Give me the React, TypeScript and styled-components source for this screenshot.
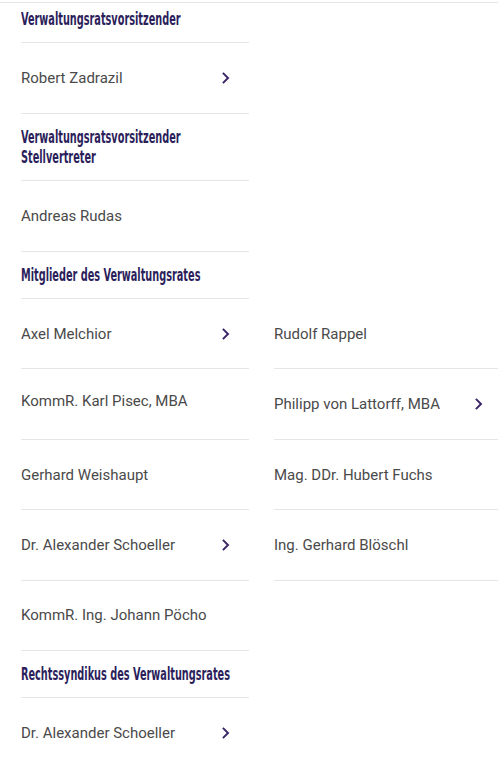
import React from "react";
import styled, { createGlobalStyle } from "styled-components";

const Global = createGlobalStyle`
  html, body { margin: 0; padding: 0; background: #fff; }
  body { overflow: hidden; }
`;

const Page = styled.div`
  width: 498px;
  overflow: hidden;
`;

const TopRule = styled.div`
  margin-top: 2px;
  height: 1px;
  background: #e6e6e6;
`;

const Content = styled.div`
  padding-left: 21px;
  width: 481px;
  overflow: hidden;
`;

const Column = styled.div`
  width: 228px;
`;

const Heading = styled.div<{ $first?: boolean }>`
  box-sizing: border-box;
  padding: ${(p) => (p.$first ? "6px" : "13.25px")} 0 13.25px;
  border-bottom: 1px solid #e6e6e6;
`;

const HeadingText = styled.h2`
  margin: 0;
  display: block;
  width: 390px;
  transform: scaleX(0.585);
  transform-origin: left center;
  font-family: "DejaVu Sans Condensed", "Liberation Sans", sans-serif;
  font-weight: 700;
  font-size: 18.5px;
  line-height: 20px;
  color: #2b1e5b;
`;

const Grid = styled.div`
  display: grid;
  grid-template-columns: 228px 228px;
  column-gap: 25px;
`;

const Row = styled.div<{ $raised?: boolean }>`
  box-sizing: border-box;
  height: 70.4px;
  display: flex;
  align-items: center;
  justify-content: space-between;
  padding: 0 19px ${(p) => (p.$raised ? "7px" : "0")} 0;
  border-bottom: 1px solid #e6e6e6;
`;

const Name = styled.span`
  font-family: Roboto, "Liberation Sans", sans-serif;
  font-size: 15px;
  color: #4a4a4a;
`;

const Chevron = () => (
  <svg width="8" height="12" viewBox="0 0 8 12" aria-hidden="true">
    <path d="M1.6 1.6 L6 6 L1.6 10.4" fill="none" stroke="#3b2766" strokeWidth="2" strokeLinecap="square" />
  </svg>
);

type Person = { name: string; link?: boolean; raised?: boolean };

const Person = ({ name, link, raised }: Person) => (
  <Row $raised={raised}>
    <Name>{name}</Name>
    {link && <Chevron />}
  </Row>
);

const members: Person[] = [
  { name: "Axel Melchior", link: true },
  { name: "Rudolf Rappel" },
  { name: "KommR. Karl Pisec, MBA", raised: true },
  { name: "Philipp von Lattorff, MBA", link: true },
  { name: "Gerhard Weishaupt" },
  { name: "Mag. DDr. Hubert Fuchs" },
  { name: "Dr. Alexander Schoeller", link: true },
  { name: "Ing. Gerhard Blöschl" },
  { name: "KommR. Ing. Johann Pöcho" },
];

export default function App() {
  return (
    <Page>
      <Global />
      <TopRule />
      <Content>
        <Column>
          <Heading $first>
            <HeadingText>Verwaltungsratsvorsitzender</HeadingText>
          </Heading>
          <Person name="Robert Zadrazil" link />
          <Heading>
            <HeadingText>Verwaltungsratsvorsitzender Stellvertreter</HeadingText>
          </Heading>
          <Person name="Andreas Rudas" />
          <Heading>
            <HeadingText>Mitglieder des Verwaltungsrates</HeadingText>
          </Heading>
        </Column>
        <Grid>
          {members.map((m) => (
            <Person key={m.name} {...m} />
          ))}
        </Grid>
        <Column>
          <Heading>
            <HeadingText>Rechtssyndikus des Verwaltungsrates</HeadingText>
          </Heading>
          <Person name="Dr. Alexander Schoeller" link />
        </Column>
      </Content>
    </Page>
  );
}
